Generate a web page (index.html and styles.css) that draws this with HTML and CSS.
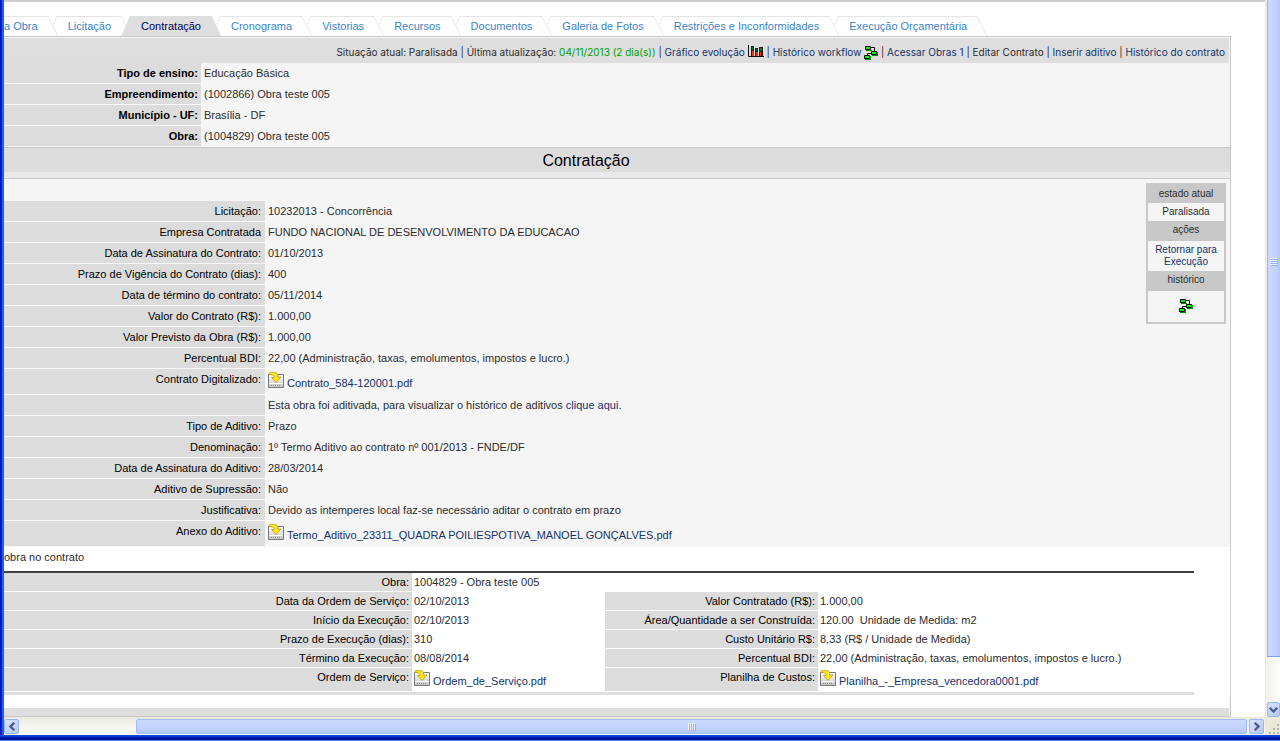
FILE: index.html
```html
<!DOCTYPE html>
<html lang="pt-BR">
<head>
<meta charset="utf-8">
<title>Contratação</title>
<link rel="stylesheet" href="styles.css">
</head>
<body>
<svg class="defs" width="0" height="0" aria-hidden="true">
  <defs>
    <linearGradient id="disk" x1="0" y1="0" x2="0" y2="1"><stop offset="0" stop-color="#fff"/><stop offset="1" stop-color="#c4c4c4"/></linearGradient>
    <symbol id="flow" viewBox="0 0 14 14">
      <path d="M2 4h6v1H2zM13 6h1v4H8V9h5zM6 10h1v4H1v-1h5z" fill="#0a8a0a"/>
      <path d="M8 2.500h2.500V5M3.500 9V6.500H7" fill="none" stroke="#fff"/>
      <path d="M7 1.500h3.500V5M3.500 9V7.500H7" fill="none" stroke="#000"/>
      <path d="M1.500.5h5v3h-5zM7.500 5.500h5v3h-5zM.5 9.500h5v3h-5z" fill="#0f0" stroke="#000"/>
    </symbol>
    <symbol id="download" viewBox="0 0 17 17">
      <path d="M.5 2.500h15v13H.5z" fill="url(#disk)" stroke="#777"/>
      <path d="M1 11.500h14" stroke="#fff"/>
      <path d="M3 13.500h10" stroke="#888" stroke-dasharray="1 1"/>
      <path d="M1 1Q7-1 9.500 2V5H13L8 10.500L3.500 5.500H6Q6 2.500 1 2.500Z" fill="#fce51c" stroke="#b99b12" stroke-width=".8"/>
    </symbol>
    <symbol id="gap" viewBox="0 0 30 20">
      <path d="M0 .5h10M19 .5h11" stroke="#e4e4e4"/>
      <path d="M10 .5l10 20M19 .5l-4 9" fill="none" stroke="#ddd" stroke-dasharray="2 1"/>
    </symbol>
  </defs>
</svg>
<div class="window">
  <main class="viewport">
    <nav class="tabs">
      <a href="#">a Obra</a><svg class="gap"><use href="#gap"/></svg>
      <a href="#">Licitação</a><svg class="gap" viewBox="0 0 30 20"><path d="M0 .5h10" stroke="#e4e4e4"/><path d="M10 .5l6 11" stroke="#ddd" stroke-dasharray="2 1"/><path d="M19 0h11v20H10z" fill="#dedede"/></svg>
      <a href="#" class="active" aria-current="page">Contratação</a><svg class="gap" viewBox="0 0 30 20"><path d="M0 0h11l9 20H0z" fill="#dedede"/><path d="M19 .5h11" stroke="#e4e4e4"/><path d="M19 .5l-3 8" stroke="#ddd" stroke-dasharray="2 1"/></svg>
      <a href="#">Cronograma</a><svg class="gap"><use href="#gap"/></svg>
      <a href="#">Vistorias</a><svg class="gap"><use href="#gap"/></svg>
      <a href="#">Recursos</a><svg class="gap"><use href="#gap"/></svg>
      <a href="#">Documentos</a><svg class="gap"><use href="#gap"/></svg>
      <a href="#">Galeria de Fotos</a><svg class="gap"><use href="#gap"/></svg>
      <a href="#">Restrições e Inconformidades</a><svg class="gap"><use href="#gap"/></svg>
      <a href="#">Execução Orçamentária</a><svg class="gap" viewBox="0 0 30 20"><path d="M0 .5h10" stroke="#e4e4e4"/><path d="M10 .5l10 20" stroke="#ddd" stroke-dasharray="2 1"/></svg>
    </nav>

    <div class="page">
      <div class="toolbar">Situação atual: Paralisada | Última atualização: <span class="ok">04/11/2013 (2 dia(s))</span> | <a href="#">Gráfico evolução
        <svg class="chart" width="16" height="12" viewBox="0 0 16 12"><path d="M.5 0v11.500H16" fill="none" stroke="#111"/><path d="M3 1h3v10H3zM7 3h3v8H7zM11 2h4v9h-4z" fill="#222"/><path d="M4 2h1v3H4zM8 4h1v2H8zM12 3h2v3h-2z" fill="#1a6a34"/><path d="M4 6h2v5H4zM8 7h2v4H8zM12 7h1v4h-1z" fill="#f03010"/></svg></a> | <a href="#">Histórico workflow <svg class="flow"><use href="#flow"/></svg></a> | <a href="#">Acessar Obras 1</a> | Editar Contrato | <a href="#">Inserir aditivo</a> | <a href="#">Histórico do contrato</a></div>

      <table class="fields head">
        <tr><th>Tipo de ensino:</th><td>Educação Básica</td></tr>
        <tr><th>Empreendimento:</th><td>(1002866) Obra teste 005</td></tr>
        <tr><th>Município - UF:</th><td>Brasília - DF</td></tr>
        <tr><th>Obra:</th><td>(1004829) Obra teste 005</td></tr>
      </table>

      <h1>Contratação</h1>

      <section class="contract">
        <table class="fields main">
          <tr><th>Licitação:</th><td>10232013 - Concorrência</td></tr>
          <tr><th>Empresa Contratada</th><td>FUNDO NACIONAL DE DESENVOLVIMENTO DA EDUCACAO</td></tr>
          <tr><th>Data de Assinatura do Contrato:</th><td>01/10/2013</td></tr>
          <tr><th>Prazo de Vigência do Contrato (dias):</th><td>400</td></tr>
          <tr><th>Data de término do contrato:</th><td>05/11/2014</td></tr>
          <tr><th>Valor do Contrato (R$):</th><td>1.000,00</td></tr>
          <tr><th>Valor Previsto da Obra (R$):</th><td>1.000,00</td></tr>
          <tr><th>Percentual BDI:</th><td>22,00 (Administração, taxas, emolumentos, impostos e lucro.)</td></tr>
          <tr class="file"><th>Contrato Digitalizado:</th><td><a href="#"><svg class="download"><use href="#download"/></svg>Contrato_584-120001.pdf</a></td></tr>
          <tr><th></th><td>Esta obra foi aditivada, para visualizar o histórico de aditivos <a href="#">clique aqui.</a></td></tr>
          <tr><th>Tipo de Aditivo:</th><td>Prazo</td></tr>
          <tr><th>Denominação:</th><td>1º Termo Aditivo ao contrato nº 001/2013 - FNDE/DF</td></tr>
          <tr><th>Data de Assinatura do Aditivo:</th><td>28/03/2014</td></tr>
          <tr><th>Aditivo de Supressão:</th><td>Não</td></tr>
          <tr><th>Justificativa:</th><td>Devido as intemperes local faz-se necessário aditar o contrato em prazo</td></tr>
          <tr class="file"><th>Anexo do Aditivo:</th><td><a href="#"><svg class="download"><use href="#download"/></svg>Termo_Aditivo_23311_QUADRA POILIESPOTIVA_MANOEL GONÇALVES.pdf</a></td></tr>
        </table>
        <aside class="state">
          <h2>estado atual</h2>
          <p>Paralisada</p>
          <h2>ações</h2>
          <p><a href="#">Retornar para Execução</a></p>
          <h2>histórico</h2>
          <p class="history"><a href="#" aria-label="Histórico"><svg class="flow"><use href="#flow"/></svg></a></p>
        </aside>
      </section>

      <section class="works">
        <p class="caption">obra no contrato</p>
        <table class="fields order">
          <colgroup><col class="c1"><col class="c2"><col class="c3"><col></colgroup>
          <tr><th>Obra:</th><td colspan="3">1004829 - Obra teste 005</td></tr>
          <tr><th>Data da Ordem de Serviço:</th><td>02/10/2013</td><th>Valor Contratado (R$):</th><td>1.000,00</td></tr>
          <tr><th>Início da Execução:</th><td>02/10/2013</td><th>Área/Quantidade a ser Construída:</th><td>120.00&nbsp; Unidade de Medida: m2</td></tr>
          <tr><th>Prazo de Execução (dias):</th><td>310</td><th>Custo Unitário R$:</th><td>8,33 (R$ / Unidade de Medida)</td></tr>
          <tr><th>Término da Execução:</th><td>08/08/2014</td><th>Percentual BDI:</th><td>22,00 (Administração, taxas, emolumentos, impostos e lucro.)</td></tr>
          <tr class="file"><th>Ordem de Serviço:</th><td><a href="#"><svg class="download"><use href="#download"/></svg>Ordem_de_Serviço.pdf</a></td><th>Planilha de Custos:</th><td><a href="#"><svg class="download"><use href="#download"/></svg>Planilha_-_Empresa_vencedora0001.pdf</a></td></tr>
        </table>
      </section>
      <div class="footer"></div>
    </div>
  </main>

  <div class="vscroll">
    <div class="vthumb"><svg width="8" height="8" viewBox="0 0 8 8"><path d="M0 .5h7M0 2.500h7M0 4.500h7M0 6.500h7" stroke="#eef4fe"/><path d="M1 1.500h7M1 3.500h7M1 5.500h7M1 7.500h7" stroke="#8cb0f8"/></svg></div>
    <button class="arrow" aria-label="Rolar para baixo"><svg width="9" height="6" viewBox="0 0 9 6"><path d="M.8.8L4.500 4.500L8.200.8" fill="none" stroke="#4d6185" stroke-width="2.400"/></svg></button>
  </div>
  <div class="hscroll">
    <button class="arrow" aria-label="Rolar para a esquerda"><svg width="6" height="9" viewBox="0 0 6 9"><path d="M5.200.8L1.500 4.500L5.200 8.200" fill="none" stroke="#4d6185" stroke-width="2.400"/></svg></button>
    <div class="hthumb"><svg width="8" height="8" viewBox="0 0 8 8"><path d="M.5 0v7M2.500 0v7M4.500 0v7M6.500 0v7" stroke="#eef4fe"/><path d="M1.500 1v7M3.500 1v7M5.500 1v7M7.500 1v7" stroke="#8cb0f8"/></svg></div>
    <button class="arrow" aria-label="Rolar para a direita"><svg width="6" height="9" viewBox="0 0 6 9"><path d="M.8.8L4.500 4.500L.8 8.200" fill="none" stroke="#4d6185" stroke-width="2.400"/></svg></button>
  </div>
  <div class="grip"><svg width="12" height="12" viewBox="0 0 12 12"><path d="M9 1h2v2H9zM5 5h2v2H5zM9 5h2v2H9zM1 9h2v2H1zM5 9h2v2H5zM9 9h2v2H9z" fill="#b8b4a2"/></svg></div>
</div>
</body>
</html>
```
FILE: styles.css
```css
* { box-sizing: border-box; }
body {
  margin: 0;
  font: 11px/14px "Liberation Sans", Arial, sans-serif;
  color: #2c2c2c;
  background: #fff;
}
a { color: #133368; text-decoration: none; }
.defs { display: block; }

.window {
  min-height: 100vh;
  display: grid;
  grid-template-columns: minmax(0, 1fr) 15px;
  grid-template-rows: 1fr 18px 6px;
  padding-left: 4px;
  background:
    linear-gradient(#0f49e0, #0034d8 30%, #00139a 50%, #00139a 75%, #3a8ee8 85%) bottom / 100% 6px no-repeat,
    linear-gradient(90deg, #0014c8 0 25%, #0024d0 25% 50%, #1c62ee 50%) left / 4px 100% no-repeat;
}
.viewport {
  background: #fff;
  border-top: 2px solid #ccc;
  overflow: hidden;
}

.tabs {
  display: flex;
  margin-top: 14px;
  height: 20px;
  line-height: 20px;
  white-space: nowrap;
}
.tabs a { color: #3b84c8; border-top: 1px solid #e4e4e4; line-height: 19px; }
.tabs .active { background: #dedede; border-color: #dedede; color: #00005a; }
.gap { width: 30px; height: 20px; flex: none; display: block; }

.page {
  margin-right: 34px;
  border: 1px solid #c8c8c8;
  border-left: 0;
  background: #f5f5f5;
}
.toolbar {
  height: 25px;
  margin: 1px 1px 0 0;
  padding-right: 4px;
  background: #dedede;
  font-family: Inter, "Liberation Sans", sans-serif;
  font-size: 10px;
  line-height: 28px;
  text-align: right;
  white-space: nowrap;
}
.ok { color: #00a000; }
.flow { width: 14px; height: 14px; vertical-align: -4px; }
.chart { vertical-align: -1px; }

.fields { width: 100%; border-collapse: separate; border-spacing: 0; table-layout: fixed; }
.fields th, .fields td { height: 21px; padding: 3px; vertical-align: top; text-align: left; }
.fields th {
  text-align: right;
  font-weight: normal;
  color: #000;
  background: #dcdcdc;
  border-bottom: 1px solid #f8f8f8;
}
.fields.head th { width: 197px; font-weight: bold; }
.fields.main th { width: 261px; padding-right: 4px; }
.main .file > * { height: 26px; }
.download { width: 17px; height: 17px; vertical-align: -2px; margin-right: 2px; }
.file td { white-space: nowrap; }

h1 {
  margin: 0;
  border: solid #c8c8c8;
  border-width: 1px 0;
  background: linear-gradient(#dcdcdc 24px, #e9e9e9 24px);
  height: 32px;
  padding-right: 62px;
  font-size: 16px;
  line-height: 25px;
  font-weight: normal;
  text-align: center;
  color: #000;
}

.contract { display: flex; align-items: flex-start; }
.main { flex: 1; margin-top: 22px; }
.state {
  flex: none;
  width: 80px;
  margin: 4px 4px 0 0;
  border: 2px solid #c8c8c8;
  font-size: 10px;
  line-height: 12px;
  text-align: center;
}
.state h2 {
  margin: 0;
  height: 20px;
  font-size: 10px;
  line-height: 18px;
  font-weight: normal;
  background: #c8c8c8;
}
.state h2:first-child { height: 18px; }
.state p { margin: 0; padding: 3px 4px; }
.state .history { padding: 8px 4px 9px; }
.history .flow { display: block; margin: 0 auto; }

.works { background: #fff; }
.caption { margin: 0; padding: 3px 0 7px; }
.works .order { width: calc(100% - 36px); border-top: 2px solid #404040; border-bottom: 3px solid #dedede; }
.order th, .order td { height: 19px; padding: 2px; }
.fields.order th, .fields.order td { height: 19px; padding: 2px; }
.fields.order th { border-color: #fff; padding-right: 3px; }
.fields.order .file > * { height: 24px; }
.c1 { width: 408px; }
.c2 { width: 193px; }
.c3 { width: 213px; }

.footer { margin-right: 1px; height: 21px; border-top: 13px solid #fff; background: #dedede; }

.vscroll { display: flex; flex-direction: column; background: linear-gradient(90deg, #f0f0ea, #fefefa); border-left: 1px solid #e8e8e0; }
.vthumb {
  height: 657px;
  margin-left: 1px;
  display: flex;
  align-items: center;
  justify-content: center;
  padding-bottom: 132px;
  background: linear-gradient(90deg, #98b4f4 1px, #cad8fd 1px, #c4d4fe 8px, #b4caf8);
  border-bottom: 1px solid #7ea3e0;
}
.arrow {
  flex: none;
  padding: 0;
  width: 15px;
  height: 15px;
  display: flex;
  align-items: center;
  justify-content: center;
  border: 1px solid #9ab8f0;
  border-radius: 2px;
  background: linear-gradient(135deg, #d8e4ff, #b4c8f6);
}
.vscroll .arrow { margin: auto 0 0 1px; width: 13px; }
.hscroll { display: flex; align-items: center; gap: 2px; padding-right: 1px; background: linear-gradient(#ecece4, #fefefa); border-top: 1px solid #e8e8e0; }
.hthumb {
  flex: 1;
  margin-left: 115px;
  height: 15px;
  display: flex;
  align-items: center;
  justify-content: center;
  border: 1px solid #a4bcf2;
  border-radius: 2px;
  background: linear-gradient(#cad8fd, #c2d3fd 60%, #b2c8f8);
}
.grip { background: #ece9d8; display: flex; align-items: flex-end; justify-content: flex-end; }
```
